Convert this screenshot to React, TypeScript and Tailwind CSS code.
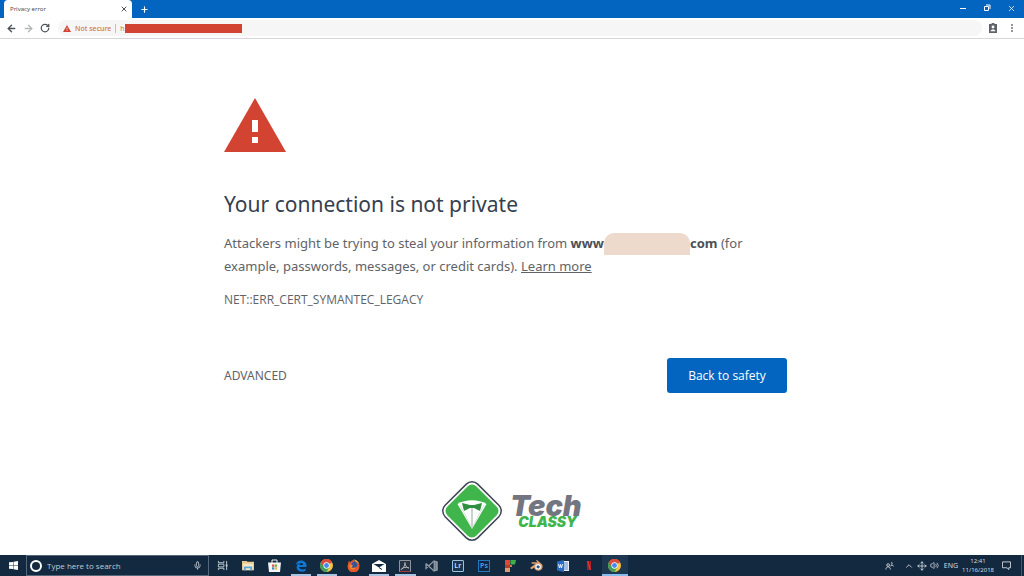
import React from "react";
import { ArrowLeft, ArrowRight, ChevronUp, Mic, Move, Plus, RotateCw, Volume2, X } from "lucide-react";

const ChromeIcon = () => (
  <svg viewBox="0 0 24 24" className="size-[13px]">
    <circle cx="12" cy="12" r="12" fill="#f4c63d" />
    <path d="M12 12 1.6 6A12 12 0 0 1 22.4 6Z" fill="#dc4a3a" />
    <path d="M12 12 1.6 6A12 12 0 0 0 12 24l5-9Z" fill="#3f9d58" />
    <path d="M12 6h10.4A12 12 0 0 0 1.6 6l5.2 9Z" fill="#dc4a3a" />
    <circle cx="12" cy="12" r="5.8" fill="#fff" />
    <circle cx="12" cy="12" r="4.5" fill="#4788e8" />
  </svg>
);

const WarningIcon = ({ className }: { className: string }) => (
  <svg viewBox="0 0 62 54" className={className}>
    <path d="M31 0 62 54H0Z" fill="#d24332" />
    <path d="M28 22h6v12h-6zM28 39h6v6h-6z" fill="#fff" />
  </svg>
);

const apps = [
  {
    name: "Task View",
    icon: (
      <svg viewBox="0 0 12 12" className="size-[11px]" fill="none" stroke="#c8ced5">
        <path d="M1.5 1v2h6V1M1.5 11V9h6v2M1.5 4.500h6v3h-6zM10.500 1v10" />
        <path d="M9.500 5h2v2h-2z" fill="#c8ced5" stroke="none" />
      </svg>
    ),
  },
  {
    name: "File Explorer",
    icon: (
      <svg viewBox="0 0 13 12" className="w-[12px]">
        <path d="M0 1h5l1 1h7v9H0z" fill="#e9c891" />
        <path d="M1 4h11v7H1z" fill="#f6e6c4" />
        <path d="M2 7h9v4H9V9H4v2H2z" fill="#5aa9dd" />
      </svg>
    ),
  },
  {
    name: "Store",
    icon: (
      <svg viewBox="0 0 13 13" className="size-[13px]">
        <path d="M4 4V1h5v3" fill="none" stroke="#f4f4f4" />
        <path d="M0 3.500h13L12 13H1z" fill="#f4f4f4" />
        <path d="M4 5.500h2.300v2.300H4z" fill="#e2583e" />
        <path d="M6.800 5.500h2.300v2.300H6.800z" fill="#6fae46" />
        <path d="M4 8.300h2.300v2.300H4z" fill="#3c8fd6" />
        <path d="M6.800 8.300h2.300v2.300H6.800z" fill="#e9b73c" />
      </svg>
    ),
  },
  {
    name: "Edge",
    open: true,
    icon: (
      <svg viewBox="0 0 24 24" className="size-[12px]">
        <path
          d="M1 10.7C2 4 6.700 1 12.300 1 19 1 23 5.600 23 11.300v2.900H8.300c.2 3.300 3 4.700 6.300 4.700 2.500 0 4.800-.7 6.700-1.900v4.500c-2 1.200-4.700 1.800-7.600 1.800C7 23.300 3.300 19.700 3.300 14.600c0-4 2.300-7 5.700-8.400C5.500 6.300 3 8 1 10.700Zm7.500-.9h7.700c0-2.300-1.300-3.900-3.700-3.900-2.300 0-3.700 1.600-4 3.900Z"
          fill="#0f77d6"
        />
      </svg>
    ),
  },
  { name: "Chrome", open: true, icon: <ChromeIcon /> },
  {
    name: "Firefox",
    icon: (
      <svg viewBox="0 0 24 24" className="size-[13px]">
        <path d="M3 3l3 3c2-3 5-4 8-4-1 1-1 2-1 2 5 0 11 4 10 10a11 11 0 0 1-22 0C1 9 3 8 3 3Z" fill="#e55a2b" />
        <path d="M12 1c5 0 10 4 11 9-2-3-4-4-6-4Z" fill="#f5b03c" />
        <path d="M8 9c1-3 4-4 6-5 4 2 6 5 5 8s-4 5-8 4-5-4-3-7Z" fill="#34549b" />
        <path d="M5 11c2-1 4-1 6 1l-3 3c3 3 6 1 8 0-1 4-7 6-10 2-1-2-2-4-1-6Z" fill="#f08a35" />
      </svg>
    ),
  },
  {
    name: "Mail",
    open: true,
    icon: (
      <svg viewBox="0 0 14 12" className="w-[14px]">
        <path d="M0 4 7 0l7 4v8H0z" fill="#fff" />
        <path d="M1.500 4h11L7 7.500z" fill="#12293f" />
        <path d="m7 7.500 3 2" stroke="#12293f" />
      </svg>
    ),
  },
  {
    name: "Acrobat",
    open: true,
    icon: (
      <svg viewBox="0 0 12 12" className="size-[12px]" fill="none">
        <path d="M.5.5h11v11H.5z" fill="#253344" stroke="#8d949c" />
        <path d="M6 2.500C6 6 4 9 2 9.500c2-2.500 6-2.500 8-1.500C8 8 6 6 6 2.500Z" stroke="#c9ccd0" strokeWidth=".8" />
        <path d="M1 11.500h10" stroke="#9c3b38" />
      </svg>
    ),
  },
  {
    name: "Visual Studio",
    icon: (
      <svg viewBox="0 0 13 12" className="w-[13px]" fill="none" stroke="#8e96a0">
        <path d="M1 3.500v5L9 1l3 1v8l-3 1-8-7.500" strokeWidth="1.300" />
        <path d="M9.500 1v10M11.500 1.500v9" strokeWidth="1.800" />
      </svg>
    ),
  },
  {
    name: "Lightroom",
    icon: (
      <span className="flex size-[12px] items-center justify-center rounded-[1px] border border-[#9cc3dc] bg-[#1b3450] text-[7px] leading-none font-semibold text-[#c3dff0]">
        Lr
      </span>
    ),
  },
  {
    name: "Photoshop",
    icon: (
      <span className="flex size-[12px] items-center justify-center border border-[#2279bd] bg-[#0e2745] text-[7px] leading-none font-semibold text-[#4ba5e3]">
        Ps
      </span>
    ),
  },
  {
    name: "Filmora",
    icon: (
      <svg viewBox="0 0 12 13" className="w-[12px]">
        <path d="M1 1h5v5H1z" fill="#dc4937" />
        <path d="M6.500 1H12l-1 4.500H6.500z" fill="#3faf4b" />
        <path d="M1 6h5v3H1z" fill="#b33e32" />
        <path d="M1 9h5v4H1z" fill="#e39a70" />
        <path d="M6 6h2v2H6z" fill="#d7773f" />
      </svg>
    ),
  },
  {
    name: "Blender",
    icon: (
      <svg viewBox="0 0 24 20" className="w-[13px]">
        <path d="M0 15 10 7H3V4h11l-3-3 2-1 9 8c3 4 1 11-6 12-5 0-8-3-8-6l-5 3Z" fill="#dca370" />
        <circle cx="15" cy="12.500" r="5" fill="#fff" />
        <circle cx="15" cy="12.500" r="3" fill="#28598e" />
      </svg>
    ),
  },
  {
    name: "Word",
    icon: (
      <svg viewBox="0 0 12 12" className="size-[12px]">
        <path d="M6 1h6v10H6z" fill="#e8effa" />
        <path d="M7 3h4M7 5h4M7 7h4M7 9h4" stroke="#3b73c4" strokeWidth=".8" />
        <path d="M0 1.500 7 0v12l-7-1.500z" fill="#2b6bc5" />
        <path d="m1.500 4 1 4 1-3.500 1 3.500 1-4" fill="none" stroke="#fff" strokeWidth=".9" />
      </svg>
    ),
  },
  {
    name: "Netflix",
    icon: (
      <svg viewBox="0 0 5 11" className="h-[9px]">
        <path d="M0 0h2v11H0zM3 0h2v11H3z" fill="#a92325" />
        <path d="M0 0h2l3 11H3z" fill="#dc3430" />
      </svg>
    ),
  },
  { name: "Chrome window", active: true, icon: <ChromeIcon /> },
];

const TitleBar = () => (
  <header className="flex h-[18px] items-end bg-[#0365c0] pl-1 text-white">
    <div className="flex h-[18px] w-32 items-center justify-between rounded-t-[4px] bg-white pr-1 pl-[6px] text-[#4b5055]">
      <span className="text-[6px] leading-none">Privacy error</span>
      <button aria-label="Close tab">
        <X size={8} strokeWidth={3} />
      </button>
    </div>
    <button aria-label="New tab" className="ml-2 flex h-full items-center">
      <Plus size={9} strokeWidth={3} />
    </button>
    <div className="ml-auto flex h-full items-center gap-4 pr-2 pb-[2px]">
      <button aria-label="Minimize">
        <svg viewBox="0 0 8 8" className="size-2" stroke="#fff">
          <path d="M1 4.500h6" />
        </svg>
      </button>
      <button aria-label="Restore">
        <svg viewBox="0 0 8 8" className="size-2" fill="none" stroke="#fff">
          <path d="M1.500 2.500h4v4h-4zM3 1h4v4" />
        </svg>
      </button>
      <button aria-label="Close">
        <X size={9} />
      </button>
    </div>
  </header>
);

const Toolbar = () => (
  <nav className="flex h-[21px] items-center border-b border-[#d5d7da] bg-white pr-[10px] pl-[6px] text-[#4f5357]">
    <div className="flex items-center gap-[6px]">
      <button aria-label="Back">
        <ArrowLeft size={11} strokeWidth={3} />
      </button>
      <button aria-label="Forward" className="text-[#b4b7ba]">
        <ArrowRight size={11} strokeWidth={3} />
      </button>
      <button aria-label="Reload">
        <RotateCw size={10} strokeWidth={3} />
      </button>
    </div>
    <div className="ml-2 flex h-4 flex-1 items-center rounded-full bg-[#f6f6f6] pl-[5px]">
      <WarningIcon className="h-[7px] w-2" />
      <span className="ml-1 text-[7px] leading-none font-medium text-[#d1753f]">Not secure</span>
      <span className="ml-1 h-[9px] w-px bg-[#bfc1c4]" />
      <span className="ml-1 text-[7px] leading-none text-[#d1753f]">h</span>
      <span className="h-[9px] w-[117px] bg-[#d24332]" />
    </div>
    <div className="ml-[6px] flex items-center gap-3">
      <button aria-label="Account">
        <svg viewBox="0 0 10 10" className="size-[10px]">
          <path d="M1 1h2.500a1.500 1.500 0 0 1 3 0H9v9H1z" fill="#5f6368" />
          <circle cx="5" cy="4" r="1.400" fill="#fff" />
          <path d="M2.500 8.200c.3-2.200 4.700-2.200 5 0z" fill="#fff" />
        </svg>
      </button>
      <button aria-label="Menu">
        <svg viewBox="0 0 4 10" className="h-[10px]" fill="#5f6368">
          <circle cx="2" cy="2" r=".9" />
          <circle cx="2" cy="5" r=".9" />
          <circle cx="2" cy="8" r=".9" />
        </svg>
      </button>
    </div>
  </nav>
);

const Logo = () => (
  <div className="flex items-center justify-center gap-2">
    <svg viewBox="0 0 60 60" className="size-[60px]">
      <rect x="7" y="7" width="46" height="46" rx="8" transform="rotate(45 30 30)" fill="#fff" stroke="#3d4654" strokeWidth="1.500" />
      <rect x="9.500" y="9.500" width="41" height="41" rx="6" transform="rotate(45 30 30)" fill="#3fb54c" />
      <path d="M15.500 23c8-5 21-5 29 0L30 48Z" fill="#fff" />
      <path d="m20 22 8 2h4l8-2-2 8-6-3h-4l-6 3Z" fill="#2f8f40" />
      <path d="M30 27v20" stroke="#98a39c" />
      <path d="m18 24 12 23 12-23" fill="none" stroke="#c9d8cc" strokeWidth=".7" />
    </svg>
    <div className="flex flex-col font-['Inter'] font-black italic">
      <span className="text-[29px] leading-[22px] text-[#737580]">Tech</span>
      <span className="pl-2 text-[14px] leading-[10px] text-[#3fb54c]">CLASSY</span>
    </div>
  </div>
);

const Taskbar = () => (
  <footer className="flex h-[21px] items-stretch bg-[#12293f] text-[#d5dae0]">
    <button aria-label="Start" className="flex w-[26px] items-center justify-center">
      <svg viewBox="0 0 10 10" className="size-[9px]" fill="#fff">
        <path d="M0 1.500 4.500 1v3.700H0zM5 .9 10 0v4.700H5zM0 5.300h4.500V9L0 8.500zM5 5.300h5V10l-5-.9z" />
      </svg>
    </button>
    <label className="flex w-[183px] items-center border border-[#56677a] pr-[6px] pl-[3px]">
      <span className="size-[12px] shrink-0 rounded-full border-2 border-white" />
      <input
        type="text"
        aria-label="Type here to search"
        placeholder="Type here to search"
        className="ml-[5px] h-3 min-w-0 flex-1 bg-transparent font-['Open_Sans'] text-[8px] leading-3 outline-none placeholder:text-[#c3cad2]"
      />
      <Mic size={9} />
    </label>
    <div className="flex w-[419px]">
      {apps.map((app) => (
        <button
          key={app.name}
          aria-label={app.name}
          className={`relative flex flex-1 items-center justify-center ${app.active ? "bg-[#1d3850]" : ""}`}
        >
          {app.icon}
          {app.open && <span className="absolute inset-x-[3px] bottom-0 h-[2px] bg-[#a9c4e2]" />}
          {app.active && <span className="absolute inset-x-0 bottom-0 h-[2px] bg-[#86bdf0]" />}
        </button>
      ))}
    </div>
    <div className="ml-auto flex items-center pr-[2px]">
      <svg viewBox="0 0 10 10" className="mr-[10px] size-[9px]" fill="none" stroke="#d5dae0">
        <circle cx="3.500" cy="4.500" r="1.500" />
        <path d="M1 9.500c0-4 5-4 5 0M7 1.500a1 1 0 1 1 0 2M6 6c.5-2 3-2 3.500 0" />
      </svg>
      <ChevronUp size={10} className="mr-[3px]" />
      <Move size={10} className="mr-[3px]" />
      <Volume2 size={9} className="mr-[5px]" />
      <span className="mr-1 text-[7px] leading-none">ENG</span>
      <time className="mr-2 text-center text-[6px] leading-[9px]">
        12:41
        <br />
        11/16/2018
      </time>
      <svg viewBox="0 0 10 10" className="mr-[10px] size-[9px]" fill="none" stroke="#d5dae0">
        <path d="M.5 1h9v6.500h-2v2l-2-2h-5z" />
      </svg>
      <span className="h-full w-px bg-[#46586b]" />
    </div>
  </footer>
);

const App: React.FC = () => {
  return (
    <div className="flex min-h-screen flex-col bg-white font-['Noto_Sans','Open_Sans',sans-serif]">
      <TitleBar />
      <Toolbar />

      <main className="flex flex-1 flex-col justify-between pt-[59px] pb-[14px]">
        <div className="mx-auto w-full max-w-[576px] pr-[13px] text-[#5f6368]">
          <WarningIcon className="h-[54px] w-[62px]" />
          <h1 className="mt-9 text-[21px] leading-8 text-[#35404f]">Your connection is not private</h1>
          <p className="mt-3 text-[13px] leading-[23px]">
            Attackers might be trying to steal your information from{" "}
            <strong className="whitespace-nowrap text-[#4b5056]">
              www
              <span className="inline-block h-[22px] w-[86px] rounded-t-[10px] bg-[#eed9cd] align-middle" />
              com
            </strong>{" "}
            (for
            <br />
            example, passwords, messages, or credit cards).{" "}
            <a href="#learn" className="underline">
              Learn more
            </a>
          </p>
          <p className="mt-3 font-['Open_Sans'] text-[12px] leading-5">NET::ERR_CERT_SYMANTEC_LEGACY</p>
          <div className="mt-12 flex items-center justify-between">
            <button className="text-[12px]">ADVANCED</button>
            <button className="h-[35px] w-[120px] rounded-[3px] bg-[#0365c0] font-['Open_Sans'] text-[12px] font-medium text-white">
              Back to safety
            </button>
          </div>
        </div>

        <Logo />
      </main>

      <Taskbar />
    </div>
  );
};

export default App;
